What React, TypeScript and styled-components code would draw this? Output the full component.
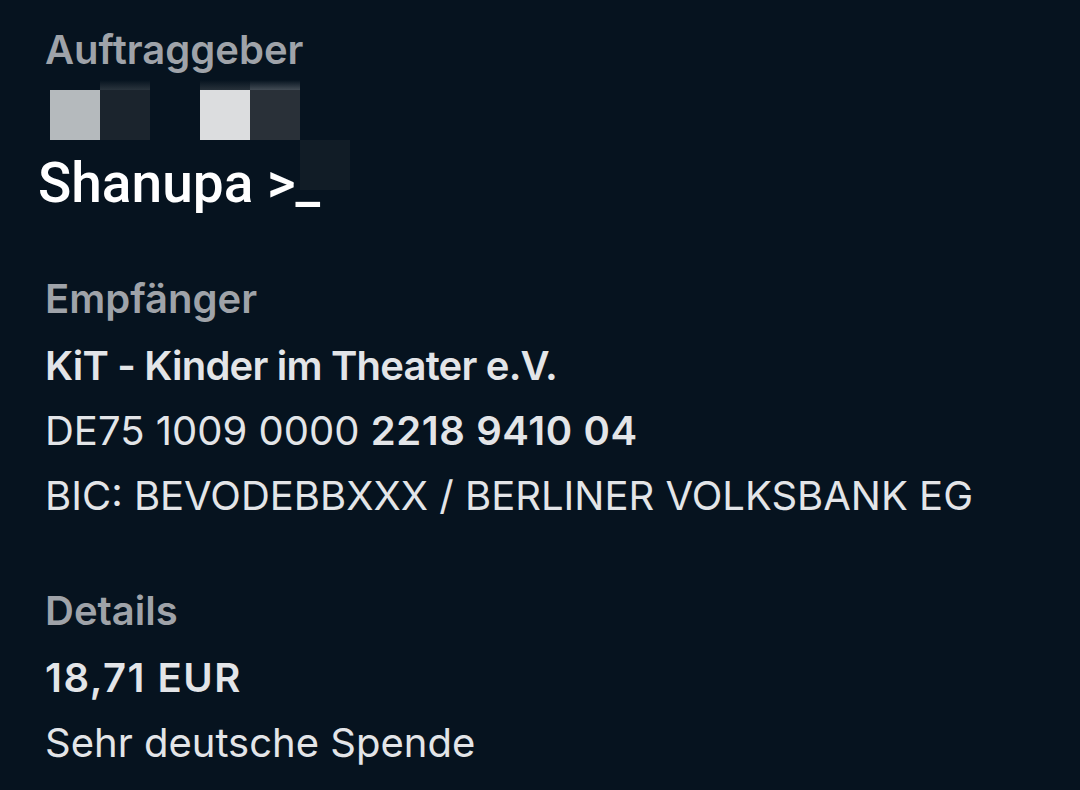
import React from "react";
import styled, { createGlobalStyle } from "styled-components";

const Global = createGlobalStyle`
  html, body { margin: 0; padding: 0; background: #06131f; }
  body { width: 1080px; height: 790px; overflow: hidden; }
`;

const Page = styled.div`
  width: 1080px;
  height: 790px;
  background: #06131f;
  box-sizing: border-box;
  padding: 17px 0 0 45px;
  display: flex;
  flex-direction: column;
  font-family: Inter, "Open Sans", sans-serif;
`;

const Section = styled.section<{ $top?: number }>`
  display: flex;
  flex-direction: column;
  margin-top: ${(p) => p.$top ?? 0}px;
`;

const Label = styled.div`
  font-size: 40px;
  line-height: 65px;
  height: 67px;
  font-weight: 600;
  color: #9fa3a9;
  white-space: nowrap;
`;

const Value = styled.div<{ $bold?: boolean; $track?: number }>`
  font-size: 40px;
  line-height: 65px;
  height: 65px;
  font-weight: ${(p) => (p.$bold ? 600 : 400)};
  letter-spacing: ${(p) => p.$track ?? 0}px;
  color: #e3e5e8;
  white-space: nowrap;
  b { font-weight: 600; letter-spacing: 0.6px; }
`;

const Mosaic = styled.div`
  display: grid;
  grid-template-columns: repeat(5, 50px);
  grid-template-rows: 10px 50px;
  margin-left: 5px;
  margin-top: -4px;
`;

const Cell = styled.div<{ $bg: string }>`
  background: ${(p) => p.$bg};
`;

const NameRow = styled.div`
  position: relative;
  padding-top: 12px;
  height: 62px;
`;

const Name = styled.div`
  font-family: Roboto, "Liberation Sans", sans-serif;
  font-size: 55px;
  font-weight: 500;
  line-height: 62px;
  color: #ffffff;
  margin-left: -7px;
  white-space: nowrap;
`;

const CensorBlock = styled.div`
  position: absolute;
  left: 255px;
  top: 0;
  width: 50px;
  height: 50px;
  background: #111c26;
`;

const cells: string[] = [
  "transparent",
  "linear-gradient(#06131f, #2a343d)",
  "transparent",
  "linear-gradient(#06131f, #27313a)",
  "linear-gradient(#06131f, #434c55)",
  "#b5babd",
  "#1b242d",
  "transparent",
  "#dcdddf",
  "#293038",
];

export default function App() {
  return (
    <>
      <Global />
      <Page>
        <Section>
          <Label>Auftraggeber</Label>
          <Mosaic>
            {cells.map((c, i) => (
              <Cell key={i} $bg={c} />
            ))}
          </Mosaic>
          <NameRow>
            <Name>Shanupa &gt;_</Name>
            <CensorBlock />
          </NameRow>
        </Section>
        <Section $top={52}>
          <Label>Empfänger</Label>
          <Value $bold $track={-0.8}>KiT - Kinder im Theater e.V.</Value>
          <Value>
            DE75 1009 0000 <b>2218 9410 04</b>
          </Value>
          <Value>BIC: BEVODEBBXXX / BERLINER VOLKSBANK EG</Value>
        </Section>
        <Section $top={50}>
          <Label>Details</Label>
          <Value $bold $track={1.5}>18,71 EUR</Value>
          <Value>Sehr deutsche Spende</Value>
        </Section>
      </Page>
    </>
  );
}
